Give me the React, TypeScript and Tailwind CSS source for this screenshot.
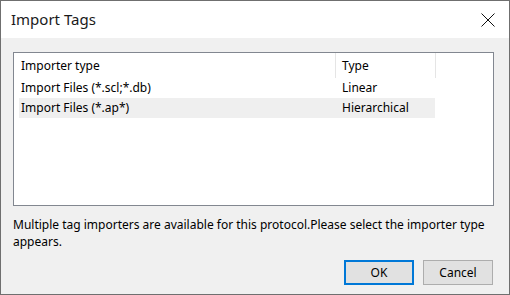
const rows = [
  { name: 'Import Files (*.scl;*.db)', type: 'Linear', selected: false },
  { name: 'Import Files (*.ap*)', type: 'Hierarchical', selected: true },
]

export default function App() {
  return (
    <div
      className="w-[510px] h-[295px] bg-[#f0f0f0] border border-[#6f6f6f] flex flex-col text-[12px] text-black"
      style={{ fontFamily: '"Noto Sans", "Liberation Sans", sans-serif' }}
    >
      {/* title bar */}
      <div className="h-[37px] shrink-0 bg-white flex items-center justify-between pl-[10px] pr-[14px]">
        <span className="text-[15px] text-[#1a1a1a]">Import Tags</span>
        <svg width="14" height="14" viewBox="0 0 14 14" className="mt-[1px]">
          <path d="M0.5 0.5 L13.5 13.5 M13.5 0.5 L0.5 13.5" stroke="#111" strokeWidth="1" fill="none" />
        </svg>
      </div>

      <div className="flex-1 flex flex-col pl-[12px] pr-[15px] pt-[14px]">
        {/* list view */}
        <div className="h-[154px] shrink-0 bg-white border border-[#828790] px-[5px]">
          <div className="flex h-[25px] items-center">
            <div className="w-[316px] pl-[2px]">Importer type</div>
            <div className="w-[100px] h-full border-l border-[#e5e5e5] flex items-center pl-[6px]">Type</div>
            <div className="h-full border-l border-[#e5e5e5]" />
          </div>
          {rows.map((r) => (
            <div
              key={r.name}
              className={`flex h-[20px] items-center w-[416px] ${r.selected ? 'bg-[#efefef]' : ''}`}
            >
              <div className="w-[316px] pl-[2px]">{r.name}</div>
              <div className="w-[100px] pl-[7px]">{r.type}</div>
            </div>
          ))}
        </div>

        <p className="mt-[10px] leading-[17px]">
          Multiple tag importers are available for this protocol.Please select the importer type appears.
        </p>

        <div className="flex justify-end gap-[9px] mt-[10px] pr-[1px]">
          <button className="w-[70px] h-[25px] bg-[#e1e1e1] border-2 border-[#0078d7]">OK</button>
          <button className="w-[70px] h-[25px] bg-[#e1e1e1] border border-[#adadad]">Cancel</button>
        </div>
      </div>
    </div>
  )
}
